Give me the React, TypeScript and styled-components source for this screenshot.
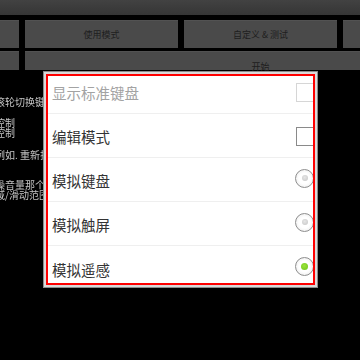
import React from "react";
import styled, { createGlobalStyle } from "styled-components";

const Global = createGlobalStyle`
  html, body {
    margin: 0;
    padding: 0;
    width: 360px;
    height: 360px;
    overflow: hidden;
    background: #000;
  }
  * { box-sizing: border-box; }
`;

const Page = styled.div`
  position: relative;
  width: 360px;
  height: 360px;
  overflow: hidden;
  background: #000;
  font-family: "Noto Sans CJK SC", "Noto Sans", sans-serif;
`;

const TopBar = styled.div`
  height: 15px;
  background: linear-gradient(#424242, #353535);
`;

const ButtonGrid = styled.div`
  display: grid;
  grid-template-columns: repeat(4, 153px);
  grid-template-rows: 28px 19px;
  column-gap: 6px;
  row-gap: 3px;
  margin-top: 5px;
  margin-left: -134px;
`;

const PadButton = styled.div<{ $span?: number }>`
  grid-column: span ${(p) => p.$span ?? 1};
  background: #4a4a4a;
  border-top: 1px solid #525252;
  color: #1e1e1e;
  font-size: 9px;
  display: flex;
  align-items: center;
  justify-content: center;
  white-space: nowrap;
`;

const StartLabel = styled.span`
  margin-top: 11px;
`;

const Notes = styled.div`
  margin-top: 27px;
  margin-left: -5px;
  color: #c4c4c4;
  font-size: 10px;
  line-height: 10px;
  display: flex;
  flex-direction: column;
  will-change: transform;
`;

const Para = styled.div<{ $gap: number }>`
  margin-top: ${(p) => p.$gap}px;
  white-space: nowrap;
`;

const Dialog = styled.div`
  position: absolute;
  left: 43px;
  top: 71px;
  width: 275px;
  height: 217px;
  border: 1px solid #8c8c8c;
  padding: 2px;
  background: #d9d9d9;
`;

const Frame = styled.div`
  height: 100%;
  border: 2px solid #f00;
  background: #fff;
  overflow: hidden;
`;

const List = styled.div`
  margin-top: -6px;
  display: flex;
  flex-direction: column;
`;

const Row = styled.div<{ $last?: boolean }>`
  height: 44px;
  flex: none;
  display: flex;
  align-items: center;
  justify-content: space-between;
  padding-left: 4px;
  border-bottom: ${(p) => (p.$last ? "none" : "1px solid #efefef")};
`;

const Label = styled.span<{ $disabled?: boolean }>`
  font-size: 14.5px;
  line-height: 1;
  padding-top: 4px;
  color: ${(p) => (p.$disabled ? "#a3a3a3" : "#333")};
`;

const Check = styled.span<{ $disabled?: boolean }>`
  width: 18px;
  height: 19px;
  margin-right: -1px;
  margin-top: 2px;
  border: 1.5px solid ${(p) => (p.$disabled ? "#d6d6d6" : "#8a8a8a")};
  background: #fff;
`;

const Radio = styled.span<{ $on?: boolean }>`
  width: 19px;
  height: 19px;
  margin-right: -1px;
  margin-top: -3px;
  border-radius: 50%;
  border: 1.6px solid #8e8e8e;
  background: radial-gradient(circle, #ffffff 45%, #e6e6e6 100%);
  display: flex;
  align-items: center;
  justify-content: center;
  &::after {
    content: "";
    width: ${(p) => (p.$on ? 7 : 6)}px;
    height: ${(p) => (p.$on ? 7 : 6)}px;
    border-radius: 50%;
    background: ${(p) =>
      p.$on
        ? "radial-gradient(circle at 45% 40%, #9be33a, #6cc41a)"
        : "radial-gradient(circle at 45% 40%, #e6e6e6, #c4c4c4)"};
  }
`;

type Item = { label: string; kind: "check" | "radio"; disabled?: boolean; on?: boolean };

const items: Item[] = [
  { label: "显示标准键盘", kind: "check", disabled: true },
  { label: "编辑模式", kind: "check" },
  { label: "模拟键盘", kind: "radio" },
  { label: "模拟触屏", kind: "radio" },
  { label: "模拟遥感", kind: "radio", on: true },
];

export default function App() {
  return (
    <Page>
      <Global />
      <TopBar />
      <ButtonGrid>
        <PadButton />
        <PadButton>使用模式</PadButton>
        <PadButton>自定义 &amp; 测试</PadButton>
        <PadButton />
        <PadButton />
        <PadButton $span={3}>
          <StartLabel>开始</StartLabel>
        </PadButton>
      </ButtonGrid>
      <Notes>
        <Para $gap={0}>滚轮切换键盘设置</Para>
        <Para $gap={11}>
          控制
          <br />
          控制
        </Para>
        <Para $gap={12}>例如. 重新排列按键</Para>
        <Para $gap={20}>
          噪音量那个
          <br />
          域/滑动范围
        </Para>
      </Notes>
      <Dialog>
        <Frame>
          <List>
            {items.map((it, i) => (
              <Row key={it.label} $last={i === items.length - 1}>
                <Label $disabled={it.disabled}>{it.label}</Label>
                {it.kind === "check" ? (
                  <Check $disabled={it.disabled} />
                ) : (
                  <Radio $on={it.on} />
                )}
              </Row>
            ))}
          </List>
        </Frame>
      </Dialog>
    </Page>
  );
}
